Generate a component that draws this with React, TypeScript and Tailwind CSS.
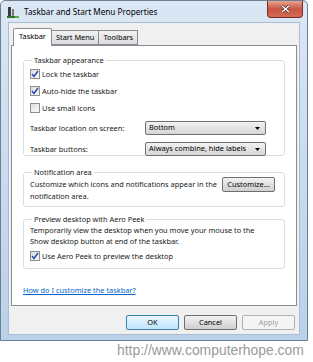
import React from "react";

const font = { fontFamily: '"Noto Sans", "Open Sans", sans-serif' };

function Check({ checked }: { checked: boolean }) {
  return (
    <div className="w-[10px] h-[10px] border border-[#8e8f8f] bg-gradient-to-br from-[#dcdcdc] to-[#fbfbfb] flex items-center justify-center shrink-0">
      {checked && (
        <svg width="8" height="8" viewBox="0 0 8 8">
          <path d="M1 4 L3 6.5 L7 1" fill="none" stroke="#2b4bb1" strokeWidth="1.5" />
        </svg>
      )}
    </div>
  );
}

function Select({ label }: { label: string }) {
  return (
    <div className="w-[121px] h-[14px] border border-[#707070] rounded-[2px] bg-gradient-to-b from-[#f2f2f2] to-[#d6d6d6] flex items-center justify-between pl-[3px] pr-[5px]">
      <span className="text-[7.4px] leading-none text-black">{label}</span>
      <svg width="5" height="3" viewBox="0 0 5 3">
        <path d="M0 0 H5 L2.5 3 Z" fill="#000" />
      </svg>
    </div>
  );
}

function Btn({ label, kind }: { label: string; kind?: "default" | "disabled" }) {
  const border =
    kind === "default" ? "border-[#3c7fb1]" : kind === "disabled" ? "border-[#adb2b5]" : "border-[#707070]";
  const bg =
    kind === "disabled"
      ? "bg-[#f4f4f4]"
      : kind === "default"
      ? "bg-gradient-to-b from-[#eaf6fd] to-[#bee6fd]"
      : "bg-gradient-to-b from-[#f2f2f2] to-[#cfcfcf]";
  const text = kind === "disabled" ? "text-[#a0a0a0]" : "text-black";
  return (
    <div className={`w-[53px] h-[15px] border ${border} ${bg} ${text} rounded-[2px] flex items-center justify-center text-[7.4px] leading-none shrink-0`}>
      {label}
    </div>
  );
}

export default function App() {
  return (
    <div className="w-[313px] h-[362px] bg-white relative overflow-hidden" style={font}>
      <div className="w-[308px] h-[341px] rounded-t-[5px] border border-[#6f7f91] bg-gradient-to-b from-[#dbe7f4] via-[#c9dbef] to-[#b9d1ea] flex flex-col">
        {/* title bar */}
        <div className="h-[21px] flex items-start justify-between">
          <div className="flex items-center pt-[5px] pl-[6px] gap-[5px]">
            <svg width="12" height="12" viewBox="0 0 12 12">
              <rect x="1" y="1" width="3" height="9" fill="#3a3a3a" />
              <rect x="5" y="3" width="2" height="7" fill="#7a7a7a" />
              <rect x="0" y="10" width="12" height="2" fill="#2f6f2f" />
              <rect x="8" y="10" width="4" height="2" fill="#5bb04d" />
            </svg>
            <span className="text-[8.2px] leading-none text-black">Taskbar and Start Menu Properties</span>
          </div>
          <div className="mr-[4px] w-[36px] h-[17px] rounded-b-[4px] border border-t-0 border-[#7a2b2b] bg-gradient-to-b from-[#e8a493] via-[#c85442] to-[#d66a58] flex items-center justify-center">
            <svg width="9" height="8" viewBox="0 0 9 8">
              <path d="M1 1 L8 7 M8 1 L1 7" stroke="#3a2020" strokeWidth="2.6" />
              <path d="M1 1 L8 7 M8 1 L1 7" stroke="#fff" strokeWidth="1.6" />
            </svg>
          </div>
        </div>
        {/* client */}
        <div className="mx-[7px] h-[313px] bg-[#f0f0f0] border border-[#a9bcd2] flex flex-col">
          {/* tabs */}
          <div className="flex items-end pl-[4px] pt-[4px] h-[22px] relative z-10">
            <div className="h-[18px] px-[5px] border border-[#898c95] border-b-0 bg-white rounded-t-[2px] flex items-center text-[7.4px] text-black -mb-[1px] pb-[1px]">Taskbar</div>
            <div className="h-[15px] px-[4px] border border-[#898c95] border-l-0 bg-gradient-to-b from-[#f2f2f2] to-[#dcdcdc] flex items-center text-[7.4px] text-black">Start Menu</div>
            <div className="h-[15px] px-[4px] border border-[#898c95] border-l-0 bg-gradient-to-b from-[#f2f2f2] to-[#dcdcdc] flex items-center text-[7.4px] text-black">Toolbars</div>
          </div>
          <div className="mx-[2px] h-[261px] bg-white border border-[#898c95] flex flex-col px-[11px] pt-[9px] text-[7.4px] leading-[10px] text-[#1a1a1a]">
            <fieldset className="border border-[#d5dfe5] rounded-[3px] h-[101px] px-[6px]">
              <legend className="px-[2px] ml-[2px] leading-[10px]">Taskbar appearance</legend>
              <div className="flex flex-col gap-[7px] pt-[4px]">
                <div className="flex items-center gap-[2px]"><Check checked /> <span>Lock the taskbar</span></div>
                <div className="flex items-center gap-[2px]"><Check checked /> <span>Auto-hide the taskbar</span></div>
                <div className="flex items-center gap-[2px]"><Check checked={false} /> <span>Use small icons</span></div>
              </div>
              <div className="flex items-center justify-between pr-[12px] mt-[8px]">
                <span>Taskbar location on screen:</span>
                <Select label="Bottom" />
              </div>
              <div className="flex items-center justify-between pr-[12px] mt-[7px]">
                <span>Taskbar buttons:</span>
                <Select label="Always combine, hide labels" />
              </div>
            </fieldset>
            <fieldset className="mt-[11px] border border-[#d5dfe5] rounded-[3px] h-[40px] px-[6px]">
              <legend className="px-[2px] ml-[2px] leading-[10px]">Notification area</legend>
              <div className="flex items-start justify-between pr-[3px]">
                <div className="leading-[12px] mt-[1px]">Customize which icons and notifications appear in the<br />notification area.</div>
                <Btn label="Customize..." />
              </div>
            </fieldset>
            <fieldset className="mt-[7px] border border-[#d5dfe5] rounded-[3px] h-[55px] px-[6px]">
              <legend className="px-[2px] ml-[2px] leading-[10px]">Preview desktop with Aero Peek</legend>
              <div className="leading-[11px] mt-[1px]">Temporarily view the desktop when you move your mouse to the<br />Show desktop button at end of the taskbar.</div>
              <div className="flex items-center gap-[2px] mt-[4px]"><Check checked /> <span>Use Aero Peek to preview the desktop</span></div>
            </fieldset>
            <div className="mt-[16px] text-[#0066cc] underline">How do I customize the taskbar?</div>
          </div>
          <div className="flex justify-end gap-[5px] pr-[4px] mt-[9px]">
            <Btn label="OK" kind="default" />
            <Btn label="Cancel" />
            <Btn label="Apply" kind="disabled" />
          </div>
        </div>
      </div>
      <div className="absolute left-[117px] top-[344px] text-[13.9px] leading-none text-[#9a9a9a]" style={{ fontFamily: '"Liberation Sans", sans-serif' }}>
        http://www.computerhope.com
      </div>
    </div>
  );
}
